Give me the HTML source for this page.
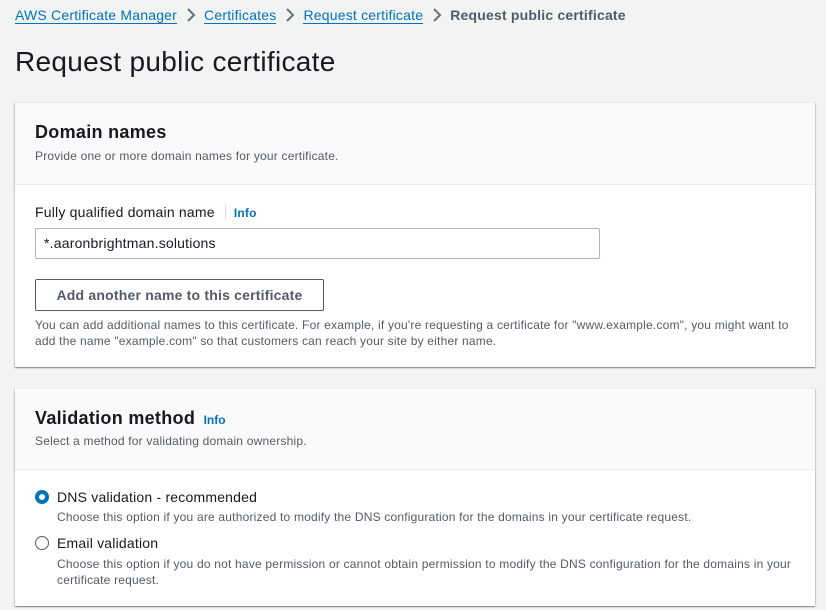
<!DOCTYPE html>
<html><head><style>
*{margin:0;padding:0;box-sizing:border-box}
body{width:826px;height:610px;background:#f2f3f3;font-family:"Liberation Sans",Arial,sans-serif;color:#16191f;position:relative;overflow:hidden}
.a{position:absolute;white-space:nowrap}
.bc{top:7px;left:15px;font-size:14px;color:#0073bb;letter-spacing:.2px}
.bc u{text-decoration:none;border-bottom:1px solid #0073bb}
.bc svg{margin:0 8px -2px 9px}
.card{position:absolute;left:15px;width:800px;background:#fff;box-shadow:0 1px 1px rgba(0,28,36,.3),1px 1px 1px rgba(0,28,36,.15),-1px 1px 1px rgba(0,28,36,.15);border-top:1px solid #eaeded}
.hd{background:#fafafa;border-bottom:1px solid #eaeded}
.h2{font-size:18px;font-weight:bold;letter-spacing:.3px}
.sub{font-size:12px;color:#545b64;letter-spacing:.2px}
.info{font-size:12px;font-weight:bold;color:#0073bb}
.t{font-size:14px;letter-spacing:.2px}
</style></head><body>
<div class="a bc"><u>AWS Certificate Manager</u><svg width="10" height="14" viewBox="0 0 10 14"><path d="M2 1l6 6-6 6" fill="none" stroke="#687078" stroke-width="2"/></svg><u>Certificates</u><svg width="10" height="14" viewBox="0 0 10 14"><path d="M2 1l6 6-6 6" fill="none" stroke="#687078" stroke-width="2"/></svg><u>Request certificate</u><svg width="10" height="14" viewBox="0 0 10 14"><path d="M2 1l6 6-6 6" fill="none" stroke="#687078" stroke-width="2"/></svg><b style="color:#545b64">Request public certificate</b></div>
<div class="a" style="top:46px;left:15px;font-size:28px;letter-spacing:.3px">Request public certificate</div>

<div class="card" style="top:102px;height:265px">
 <div class="hd" style="height:82px"></div>
</div>
<div class="a h2" style="top:122px;left:35px">Domain names</div>
<div class="a sub" style="top:149px;left:35px">Provide one or more domain names for your certificate.</div>
<div class="a t" style="top:204px;left:35px">Fully qualified domain name <span style="display:inline-block;width:1px;height:14px;background:#d5dbdb;margin:0 8px -2px 6px"></span><span class="info">Info</span></div>
<div class="a t" style="top:228px;left:35px;width:565px;height:31px;border:1px solid #aab7b8;border-radius:2px;padding:6px 8px">*.aaronbrightman.solutions</div>
<div class="a t" style="top:279px;left:35px;width:289px;height:32px;border:1px solid #545b64;border-radius:2px;font-weight:bold;color:#545b64;text-align:center;line-height:30px">Add another name to this certificate</div>
<div class="a sub" style="top:317px;left:35px;line-height:16px">You can add additional names to this certificate. For example, if you're requesting a certificate for "www.example.com", you might want to<br>add the name "example.com" so that customers can reach your site by either name.</div>

<div class="card" style="top:388px;height:218px">
 <div class="hd" style="height:81px"></div>
</div>
<div class="a" style="top:408px;left:35px"><span class="h2">Validation method</span> <span class="info" style="margin-left:4px">Info</span></div>
<div class="a sub" style="top:434px;left:35px">Select a method for validating domain ownership.</div>
<div class="a" style="top:490px;left:35px;width:14px;height:14px;border-radius:50%;border:4px solid #0073bb"></div>
<div class="a t" style="top:489px;left:57px">DNS validation - recommended</div>
<div class="a sub" style="top:510px;left:57px">Choose this option if you are authorized to modify the DNS configuration for the domains in your certificate request.</div>
<div class="a" style="top:536px;left:35px;width:14px;height:14px;border-radius:50%;border:1.5px solid #545b64"></div>
<div class="a t" style="top:535px;left:57px">Email validation</div>
<div class="a sub" style="top:556px;left:57px;line-height:16px">Choose this option if you do not have permission or cannot obtain permission to modify the DNS configuration for the domains in your<br>certificate request.</div>
</body></html>
